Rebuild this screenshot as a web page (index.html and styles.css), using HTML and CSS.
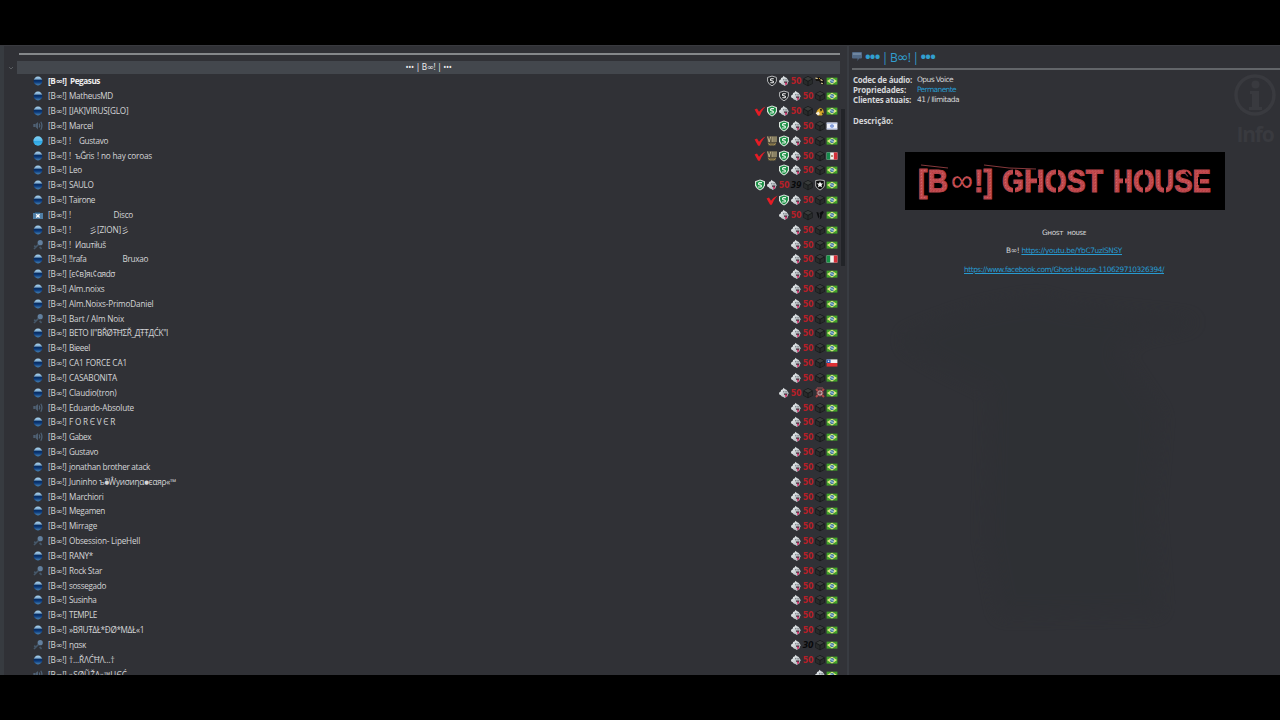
FILE: index.html
```html
<!DOCTYPE html>
<html lang="pt-BR">
<head>
<meta charset="utf-8">
<title>Ghost House</title>
<link rel="stylesheet" href="styles.css">
</head>
<body>
<svg class="defs" width="0" height="0">
  <defs>
    <linearGradient id="orb" x2="0" y2="1"><stop offset="0" stop-color="#a9d4f0"/><stop offset=".3" stop-color="#7fa9cd"/><stop offset=".38" stop-color="#062a5c"/><stop offset=".62" stop-color="#0b397a"/><stop offset="1" stop-color="#4783b6"/></linearGradient>
    <linearGradient id="orbOn" x2="0" y2="1"><stop offset="0" stop-color="#80d2f4"/><stop offset=".45" stop-color="#5abdf0"/><stop offset=".5" stop-color="#2ba4e2"/><stop offset="1" stop-color="#45b9ee"/></linearGradient>
    <linearGradient id="gh" x2="1" y2="1"><stop offset="0" stop-color="#f4f7f8"/><stop offset="1" stop-color="#a4adb2"/></linearGradient>
    <symbol id="idle" viewBox="0 0 12 12"><circle cx="6" cy="6" r="4.4" fill="url(#orb)"/></symbol>
    <symbol id="talk" viewBox="0 0 12 12"><circle cx="6" cy="6" r="4.7" fill="url(#orbOn)"/></symbol>
    <symbol id="mute" viewBox="0 0 12 12"><path d="M1.3 4h2v3h-2zM3.6 4L6 2v7.5L3.6 7z" fill="#4e5f72"/><path d="M7.2 3.5q1 2 0 4M8.8 1.8q2.2 3.8 0 8" fill="none" stroke="#4f6378" stroke-width="1.2"/></symbol>
    <symbol id="mic" viewBox="0 0 12 12"><circle cx="8.2" cy="3.7" r="2.6" fill="#62809f"/><path d="M6.4 5.5L2 10M2 7l1.7.5M7.6 8l2 1.8" stroke="#46586a" stroke-width="1.7"/></symbol>
    <symbol id="away" viewBox="0 0 12 12"><path d="M1 4h10v6H1z" fill="#4f7ea6"/><path d="M3 3h5v1H3z" fill="#28506e"/><path d="M4.2 5.2l3.4 3.4M7.6 5.2L4.2 8.6" stroke="#fff" stroke-width="1.4"/></symbol>
    <symbol id="ghost" viewBox="0 0 12 12"><path d="M1 6.4Q1 5 2.6 4.8 2.6 2.4 4.8 2.2L5.6.7 6.7 2Q9.4 2.4 9.8 4.8l1 1.4-.8 1.2q0 2.2-2 2.9l-1.4.7-1.2-1Q3.5 10 2.8 8.2 1.2 7.8 1 6.4z" fill="url(#gh)"/><path d="M5.8 3.9v1.5M8 4.1v1.4" stroke="#555c64" stroke-width=".9"/><path d="M5.8 6.5h3.6l-.7 2-2.2-.6z" fill="#3b2935"/><path d="M7 7.5l2 .2-.3 2-1.3.5z" fill="#d8306a"/></symbol>
    <symbol id="cube" viewBox="0 0 12 12"><path d="M6 .9l4.7 2.5v5.4L6 11.3 1.3 8.8V3.4z" fill="#17191a"/><path d="M6 1.7l3.8 2L6 5.8 2.2 3.7z" fill="#393c3b"/><path d="M2 4.6l3.5 2v3.7L2 8.4zM6.5 6.6l3.5-2v3.8l-3.5 1.9z" fill="#282b2b"/></symbol>
    <symbol id="check" viewBox="0 0 12 12"><path d="M.6 4.4L3 3.6 5 6.8Q7.3 3.2 11.5 1.4 7.6 5.6 5.8 10.8H4.1z" fill="#e51c25"/></symbol>
    <symbol id="green" viewBox="0 0 12 12"><path d="M6 .5l5 1.7v4Q10 9.8 6 11.5 2 9.8 1 6.2v-4z" fill="#dce9df"/><path d="M6 1.6l3.9 1.3v3.2Q9.1 9 6 10.4 2.9 9 2.1 6.1V2.9z" fill="#178d42"/><path d="M8 3.7H5.2Q3.4 5.4 6 5.9 8.4 6.4 6.8 8H4" fill="none" stroke="#e8f3e8" stroke-width="1.2"/></symbol>
    <symbol id="dark" viewBox="0 0 12 12"><path d="M6 1.1l4.4 1.3v3.8Q9.5 9.3 6 10.8 2.5 9.3 1.6 6.2V2.4z" fill="#202326" stroke="#c8cacc" stroke-width=".9"/><path d="M7.8 3.8H5Q3.6 5.5 6 5.8 8.3 6.3 7 7.8H4.3" fill="none" stroke="#eee" stroke-width="1.1"/></symbol>
    <symbol id="star" viewBox="0 0 12 12"><path d="M1.7 1.5L6 1l4.3.5V7Q9 9.7 6 11 3 9.7 1.7 7z" fill="#08090a" stroke="#ddd" stroke-width=".8"/><path d="M6 2.5l1 2 2.1.1-1.6 1.5.5 2.2L6 7.2 4 8.3l.5-2.2-1.6-1.5L5 4.5z" fill="#fff"/></symbol>
    <symbol id="eight" viewBox="0 0 12 12"><path d="M1 1h10v3L9.8 10.6H2.2L1 4z" fill="#57503f"/><path d="M1.6 1.6L3.2 7l1.5-5.4M6.2 1.6V7M8 1.6V7M10 1.6V7" fill="none" stroke="#c9bd94" stroke-width=".9"/><path d="M2.6 8.2l1.2 2M5 8.5v2M7 8.5v2M9.4 8.2l-1.2 2" stroke="#b39a55" stroke-width="1"/></symbol>
    <symbol id="jaguar" viewBox="0 0 12 12"><path d="M1 3l4-1 5 3v4L8 10 5 6 2 6z" fill="#151310"/><path d="M1.4 3.2l2.4.3M6.5 4.6l2 1.2M7.2 8l1.6.8" stroke="#e5d6a0" stroke-width="1.2"/><path d="M5 3l1 1" stroke="#c58c20"/></symbol>
    <symbol id="yellow" viewBox="0 0 12 12"><path d="M2 8l1.5-3L6 2.8l3 1.4.8 3.3L8 10.6H4z" fill="#d8a92b"/><path d="M5.6 3.6l3 1-1.8 2.2zM7.6 8l1.6-.6-.6 2.2z" fill="#282315"/><path d="M1.6 8.2l3-1.7 1.2 2.4L4 10.4z" fill="#f4edda"/></symbol>
    <symbol id="claw" viewBox="0 0 12 12"><path d="M2.4 3l2 .4 1 4-1 2.2zM5.5 4l3-2 1.4 1-2 3.2L7.5 9 5.7 10.4 6.2 6z" fill="#0c0d0f"/></symbol>
    <symbol id="crest" viewBox="0 0 12 12"><path d="M2 2l8 8M10 2L2 10" stroke="#b54545" stroke-width="2"/><circle cx="6" cy="6" r="3.1" fill="#bfb0ae" stroke="#8d3c41"/><path d="M4.4 4.4h2.4l1 1.3-1.4 1.8-1.9-.3z" fill="#7b4b50"/><path d="M3 1h6" stroke="#a65457"/></symbol>
    <symbol id="br" viewBox="0 0 12 12"><path d="M.6 2.6h10.8v7H.6z" fill="#42a329"/><path d="M1 6.1L6 2.7l5 3.4-5 3.4z" fill="#dfe98a"/><circle cx="6" cy="6.1" r="2.1" fill="#3b74a0"/><path d="M4.2 5.5l3.5 1" stroke="#d5ecef" stroke-width=".8"/></symbol>
    <symbol id="il" viewBox="0 0 12 12"><path d="M.6 2.4h10.8v7.2H.6z" fill="#f0f2fb"/><path d="M.6 3.3h10.8M.6 8.8h10.8" stroke="#a5b6e0" stroke-width=".8"/><path d="M6 4.3l1.6 2.6H4.4zM6 7.8L4.4 5.2h3.2z" fill="none" stroke="#5278d0" stroke-width=".6"/></symbol>
    <symbol id="mx" viewBox="0 0 12 12"><path d="M.6 2.4h10.8v7.2H.6z" fill="#f4f1ef"/><path d="M.6 2.4h3.6v7.2H.6z" fill="#17894c"/><path d="M7.8 2.4h3.6v7.2H7.8z" fill="#d52f39"/><circle cx="6" cy="6" r="1" fill="#9b7650"/></symbol>
    <symbol id="it" viewBox="0 0 12 12"><path d="M.6 2.4h10.8v7.2H.6z" fill="#f4f1ef"/><path d="M.6 2.4h3.6v7.2H.6z" fill="#169244"/><path d="M7.8 2.4h3.6v7.2H7.8z" fill="#d52f39"/></symbol>
    <symbol id="cl" viewBox="0 0 12 12"><path d="M.6 2.4h10.8V6H.6z" fill="#f2f2f6"/><path d="M.6 6h10.8v3.6H.6z" fill="#df3035"/><path d="M.6 2.4h4V6h-4z" fill="#315fb3"/><circle cx="2.6" cy="4.2" r=".8" fill="#fff"/></symbol>
  </defs>
</svg>
<main class="app">
  <section class="tree">
    <div class="spacer"></div>
    <div class="channel"><svg class="chevron" viewBox="0 0 6 4"><path d="M1 1l2 2 2-2"/></svg><div class="channel-name"><span class="fit" data-w="46">••• | B<small>∞</small>! | •••</span></div></div>
    <div class="clients" id="clients"></div>
  </section>
  <div class="scroll"><div class="thumb"></div></div>
  <aside class="info">
    <svg class="watermark" viewBox="0 0 430 380"><path d="M55 46Q120 15 190 8l28 8 130 14-57 12-24 18 43 64-8 94 8 101-158 3-14-75 4-150-56-27-26-16z"/></svg>
    <div class="info-mark"><svg viewBox="0 0 44 44"><circle cx="22" cy="22" r="19"/><path d="M17 18h9v16h3v3H16v-3h3V21h-2z"/><circle class="dot" cx="22.5" cy="11.5" r="4"/></svg><span class="fit" data-w="37">Info</span></div>
    <header class="title"><svg class="bubble" viewBox="0 0 10 10"><path d="M1 0h8q1 0 1 1v4.5q0 1-1 1H7L5.5 9V6.5H1q-1 0-1-1V1q0-1 1-1z" fill="#526a87"/><path d="M1 1h8v2H1z" fill="#7086a0"/></svg><h1><span class="fit" data-w="70"><b>•••</b> | B<i>∞</i>! | <b>•••</b></span></h1></header>
    <dl class="facts">
      <dt><span class="fit" data-w="59">Codec de áudio:</span></dt><dd><span class="fit" data-w="36">Opus Voice</span></dd>
      <dt><span class="fit" data-w="53">Propriedades:</span></dt><dd class="blue"><span class="fit" data-w="39">Permanente</span></dd>
      <dt><span class="fit" data-w="58">Clientes atuais:</span></dt><dd><span class="fit" data-w="42">41 / Ilimitada</span></dd>
    </dl>
    <div class="desc"><span class="fit" data-w="40">Descrição:</span></div>
    <div class="banner"><svg viewBox="0 0 320 58">
      <defs><pattern id="grain" width="3" height="3" patternUnits="userSpaceOnUse"><path d="M0 0h3v3H0z" fill="#c44a4e"/><path d="M1 0h1v1H1z" fill="#cc6468"/><path d="M0 2h1v1H0z" fill="#b23f45"/></pattern></defs>
      <g class="banner-text">
        <text x="13" y="40" textLength="30" lengthAdjust="spacingAndGlyphs">[B</text>
        <text class="thin" x="46" y="39" textLength="22" lengthAdjust="spacingAndGlyphs">∞</text>
        <text x="69" y="40" textLength="19" lengthAdjust="spacingAndGlyphs">!]</text>
        <text x="97" y="40" textLength="101" lengthAdjust="spacingAndGlyphs">GHOST</text>
        <text x="208" y="40" textLength="98" lengthAdjust="spacingAndGlyphs">HOUSE</text>
      </g>
      <path class="cuts" d="M109 15v8M109 35v8M152 15v8M152 35v8M170 21l6 5M239 15v8M239 35v8M260 35v8M281 20l6 7M133 26v7M219 26v7M294 25v8"/>
      <path class="scratches" d="M16 13l27 3M79 13l25 3 27 1"/>
    </svg></div>
    <div class="links">
      <p><span class="fit" data-w="44">Gʜᴏsᴛ &nbsp;ʜᴏᴜsᴇ</span></p>
      <p><span class="fit" data-w="116">B<small>∞</small>! <a>https://youtu.be/YbC7uzlSNSY</a></span></p>
      <p><span class="fit" data-w="200"><a>https://www.facebook.com/Ghost-House-110629710326394/</a></span></p>
    </div>
  </aside>
</main>
<script src="app.js"></script>
</body>
</html>
```
FILE: styles.css
```css
* { box-sizing: border-box; }
body { margin: 0; padding: 45px 0; width: 1280px; height: 720px; overflow: hidden; background: #000; color: #d4d5d7; font-family: "Open Sans", "Noto Sans", "DejaVu Sans", "Noto Sans CJK JP", sans-serif; font-size: 8.2px; }
.defs { position: absolute; }
.app { display: flex; height: 630px; background: #303136; overflow: hidden; border-top: 1px solid #393a3f; }
.tree { width: 840px; height: 630px; border-left: 4px solid #373b40; overflow: hidden; flex: none; }
.spacer { margin-left: 15px; height: 9px; border-bottom: 2px solid #85888b; }
.channel { display: flex; align-items: center; height: 13px; margin-top: 6px; }
.chevron { width: 6px; height: 4px; margin: 0 3px 0 4px; fill: none; stroke: #65686c; stroke-width: .8; }
.channel-name { flex: 1; height: 13px; line-height: 12px; text-align: center; background: #43474d; color: #f0f1f2; }
.row { display: flex; align-items: center; height: 14.835px; padding: 0 2px 0 28px; }
.row:first-child { font-weight: 700; color: #eee; }
.state { width: 12px; height: 12px; margin-right: 4px; flex: none; }
.fit { display: inline-block; white-space: nowrap; }
small { font-family: "DejaVu Sans", sans-serif; font-size: 1.05em; line-height: 1; }
.prefix { width: 20.5px; flex: none; line-height: 14px; height: 14px; }
.name { display: flex; flex: 1; line-height: 14px; height: 14px; }
.dot-small { font-size: .65em; vertical-align: 1px; line-height: 1; }
.badges { display: flex; height: 12px; }
.badges svg { width: 12px; height: 12px; }
.num { width: 12px; line-height: 13px; text-align: center; font-family: "DejaVu Sans", sans-serif; font-size: 8px; font-weight: 700; letter-spacing: -.4px; color: #b81f28; }
.num.black { color: #08090b; font-style: italic; font-weight: 700; }
.scroll { width: 9px; flex: none; padding-top: 63px; background: #323338; border-right: 2px solid #393c42; }
.thumb { width: 4px; height: 157px; margin-left: 1px; background: #222428; }
.info { position: relative; flex: 1; height: 630px; padding-left: 3px; overflow: hidden; }
.title { display: flex; height: 24px; border-bottom: 2px solid #626569; }
.bubble { width: 10px; height: 10px; margin-top: 6px; }
h1 { margin: 0 0 0 3px; padding-top: 2px; color: #319fcf; font-size: 12px; line-height: 20px; font-weight: 400; }
h1 b { font-size: 15px; line-height: 1; }
h1 i { font-family: "DejaVu Sans", sans-serif; font-style: normal; font-size: 14px; line-height: 1; }
.facts { display: grid; grid-template-columns: 64px 200px; grid-auto-rows: 10.2px; margin: 5px 0 0 1px; font-family: "DejaVu Sans", sans-serif; font-size: 7.5px; line-height: 10px; }
dt, .desc { font-weight: 700; font-family: "Open Sans", sans-serif; font-size: 8px; line-height: 9px; }
dd { margin: 0; font-family: "DejaVu Sans", sans-serif; }
.blue, a { color: #279ad0; }
a { text-decoration: underline; }
.desc { height: 10px; margin: 10px 0 0 1px; }
.banner { width: 320px; height: 58px; margin: 26px 0 0 53px; background: #000; }
.banner svg { display: block; width: 320px; height: 58px; }
.banner-text { fill: url(#grain); stroke: #b3444a; stroke-width: 1.1; font: 700 31px "Liberation Sans", sans-serif; }
.thin { font-weight: 400; stroke: none; }
.cuts { stroke: #000; stroke-width: 2; fill: none; }
.scratches { stroke: #a8484b; stroke-width: .8; fill: none; }
.links { width: 320px; margin: 17px 0 0 52px; padding: 0; text-align: center; font-family: "DejaVu Sans", sans-serif; font-size: 7.4px; }
.links p { height: 12px; line-height: 12px; margin: 0 0 6.6px; }
.watermark { position: absolute; left: 0; top: 246px; width: 430px; height: 380px; fill: #2e3034; opacity: .6; filter: blur(8px); }
.info-mark { position: absolute; left: 384px; top: 27px; width: 44px; color: #393a3f; text-align: center; font-family: "Open Sans", sans-serif; font-size: 21px; font-weight: 700; line-height: 34px; }
.info-mark svg { display: block; width: 44px; height: 44px; fill: #393a3f; }
.info-mark svg circle { fill: none; stroke: #393a3f; stroke-width: 3.5; }
.info-mark svg .dot { fill: #393a3f; stroke: none; }
```
FILE: app.js
```js
// Each client: state icon, text runs [text, start, end], badges left to right.
const std = 'ghost 50 cube br';
const clients = [
  ['idle', [['Pegasus', 70, 100]], 'dark ghost 50 cube jaguar br'],
  ['idle', [['MatheusMD', 69, 113]], 'dark ghost 50 cube br'],
  ['idle', [['[JAK]VIRUS[GLO]', 69, 128.5]], 'check green ghost 50 cube yellow br'],
  ['mute', [['Marcel', 69, 93]], 'green ghost 50 cube il'],
  ['talk', [['!', 69, 71], ['Gustavo', 79, 108]], 'check eight green ghost 50 cube br'],
  ['idle', [['!', 69, 71], ['ъĞris', 75, 94], ['! no hay coroas', 97, 152]], 'check eight green ghost 50 cube mx'],
  ['idle', [['Leo', 69, 82]], 'green ghost 50 cube br'],
  ['idle', [['SAULO', 69, 93.5]], 'green ghost 50 39 cube star br'],
  ['idle', [['Tairone', 69, 95]], 'check green ghost 50 cube br'],
  ['away', [['!', 69, 71], ['Disco', 113.5, 133]], 'ghost 50 cube claw br'],
  ['idle', [['!', 69, 71], ['彡[ZION]彡', 89, 129]], std],
  ['mic', [['!', 69, 71], ['Иαuтiłuš', 75, 106]], std],
  ['idle', [['!!rafa', 69, 86.5], ['Bruxao', 122.5, 148]], 'ghost 50 cube it'],
  ['idle', [['[є¢в]яι¢αяdσ', 69, 115]], std],
  ['idle', [['Alm.noixs', 69, 104.5]], std],
  ['idle', [['Alm.Noixs-PrimoDaniel', 69, 153.5]], std],
  ['mic', [['Bart / Alm Noix', 69, 124]], std],
  ['idle', [['BETO II"BŘØŦĦΣŘ_ДŦŦДĆK"I', 69, 168]], std],
  ['idle', [['Bieeel', 69, 90]], std],
  ['idle', [['CA1 FORCE CA1', 69, 127]], 'ghost 50 cube cl'],
  ['idle', [['CASABONITA', 69, 117]], std],
  ['idle', [['Claudio(tron)', 69, 116.5]], 'ghost 50 cube crest br'],
  ['mute', [['Eduardo-Absolute', 69, 134]], std],
  ['idle', [['F O R Є V Є R', 69, 115]], std],
  ['mute', [['Gabex', 69, 91]], std],
  ['idle', [['Gustavo', 69, 98]], std],
  ['idle', [['jonathan brother atack', 69, 150]], std],
  ['idle', [['Juninho', 69, 97], ['ъ<span class="dot-small">●</span>̃Ŵуиσиηα<span class="dot-small">●</span>єαяρ«™', 99, 176]], std],
  ['idle', [['Marchiori', 69, 103.5]], std],
  ['idle', [['Megamen', 69, 105]], std],
  ['idle', [['Mirrage', 69, 97]], std],
  ['mic', [['Obsession- LipeHell', 69, 140]], std],
  ['idle', [['RANY*', 69, 93]], std],
  ['mic', [['Rock Star', 69, 102]], std],
  ['idle', [['sossegado', 69, 106]], std],
  ['idle', [['Susinha', 69, 96.5]], std],
  ['idle', [['TEMPLE', 69, 97]], std],
  ['idle', [['»BЯUŦΔŁ*ĐØ*MΔŁ«1', 69, 144]], std],
  ['mic', [['ηαsκ', 69, 86]], 'ghost 30 cube br'],
  ['idle', [['†...ŘΛĆĦΛ...†', 69, 114.5]], std],
  ['mute', [['»SØŨŽΛ»™ЦЄĆ', 69, 127]], 'ghost br']
];

const icon = (id, cls = '') => `<svg class="${cls}"><use href="#${id}"/></svg>`;
const badge = b => /^\d/.test(b) ? `<span class="num ${b === '50' ? '' : 'black'}">${b}</span>` : icon(b);

document.getElementById('clients').innerHTML = clients.map(([state, runs, badges]) => {
  let x = 68.5;
  const name = runs.map(([text, start, end]) => {
    const gap = start - x;
    x = end;
    return `<span style="width:${end - start}px;margin-left:${gap}px"><span class="fit" data-w="${end - start}">${text}</span></span>`;
  }).join('');
  return `<div class="row">${icon(state, 'state')}<span class="prefix"><span class="fit" data-w="18.5">[B<small>∞</small>!]</span></span><div class="name">${name}</div><div class="badges">${badges.split(' ').map(badge).join('')}</div></div>`;
}).join('');

// Tracking is spread evenly so each run fills its column width.
document.querySelectorAll('.fit').forEach(el => {
  const n = [...el.textContent].length;
  const extra = Number(el.dataset.w) - el.getBoundingClientRect().width;
  if (n > 1) el.style.letterSpacing = `${extra / n}px`;
});
```
